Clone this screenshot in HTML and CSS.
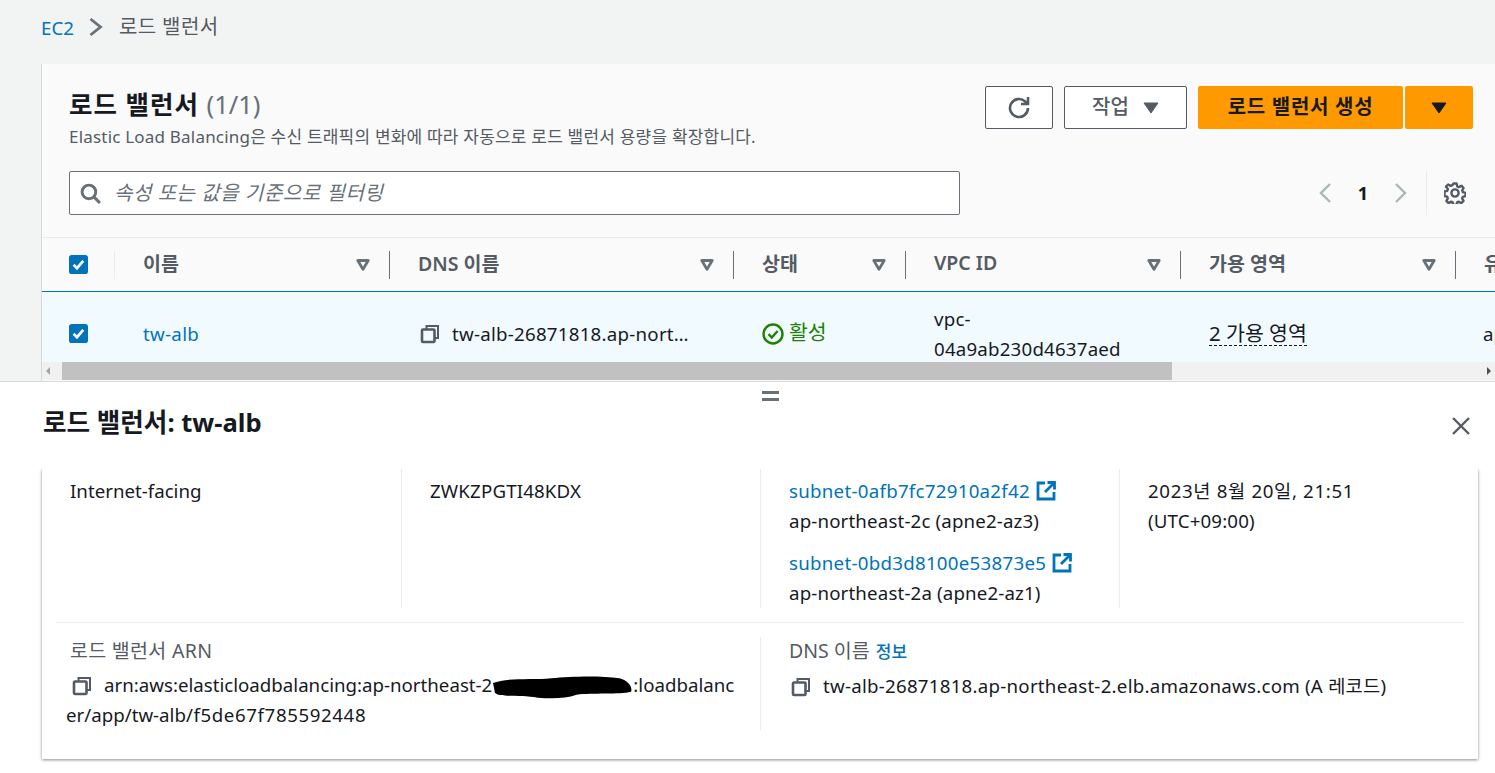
FILE: index.html
```html
<!DOCTYPE html>
<html lang="ko">
<head>
<meta charset="utf-8">
<title>로드 밸런서</title>
<link rel="stylesheet" href="styles.css">
</head>
<body>
<svg class="defs" width="0" height="0" aria-hidden="true">
  <symbol id="copy" viewBox="0 0 20 20"><path d="M6.5 5.5V2h11.5v12h-3.5" fill="none" stroke="currentColor" stroke-width="2"/><rect x="2" y="5.5" width="12.5" height="12.5" rx="1" fill="none" stroke="currentColor" stroke-width="2.6"/></symbol>
  <symbol id="ext" viewBox="0 0 20 20"><path d="M9 2H2v16h16v-7" fill="none" stroke="currentColor" stroke-width="2.8"/><path d="M11.5 1.5h7v7M18 2l-9 9" fill="none" stroke="currentColor" stroke-width="2.8"/></symbol>
  <symbol id="filter" viewBox="0 0 14 12"><path d="M1.8 1.5h10.4L7 10.4z" fill="none" stroke="currentColor" stroke-width="2.8" stroke-linejoin="round"/></symbol>
  <symbol id="check" viewBox="0 0 20 20"><rect width="20" height="20" rx="3" fill="#0073bb"/><path d="M4.8 10.3l3.6 3.6 6.6-7.6" fill="none" stroke="#fff" stroke-width="2.8"/></symbol>
  <symbol id="caret" viewBox="0 0 16 12"><path d="M1 1h14L8 11z" fill="currentColor" stroke="currentColor" stroke-linejoin="round"/></symbol>
</svg>
<div class="page">
  <nav class="crumbs">
    <a class="link">EC2</a>
    <svg class="crumb-sep" viewBox="0 0 14 20"><path d="M1.5 2l10 8-10 8" fill="none" stroke="currentColor" stroke-width="2.8"/></svg>
    <span class="crumb-current">로드 밸런서</span>
  </nav>
  <section class="card">
    <header class="card-head">
      <div class="card-title">
        <h1>로드 밸런서 <span class="count">(1/1)</span></h1>
        <p>Elastic Load Balancing은 수신 트래픽의 변화에 따라 자동으로 로드 밸런서 용량을 확장합니다.</p>
      </div>
      <div class="actions">
        <button class="btn btn-icon"><svg viewBox="0 0 22 22" class="refresh"><path d="M20 11a9 9 0 1 1-2.8-6.5L20 7" fill="none" stroke="currentColor" stroke-width="2.6"/><path d="M20 0v7h-7" fill="none" stroke="currentColor" stroke-width="2.6"/></svg></button>
        <button class="btn btn-menu"><span class="btn-label">작업</span><svg class="caret"><use href="#caret"/></svg></button>
        <div class="split">
          <button class="btn-primary main"><span class="btn-label">로드 밸런서 생성</span></button>
          <button class="btn-primary drop"><svg class="caret"><use href="#caret"/></svg></button>
        </div>
      </div>
    </header>
    <div class="toolbar">
      <div class="search">
        <svg class="search-icon" viewBox="0 0 20 20"><circle cx="8.5" cy="8.5" r="6.5" fill="none" stroke="currentColor" stroke-width="2.8"/><path d="M13 13l6 6" fill="none" stroke="currentColor" stroke-width="2.8"/></svg>
        <span class="placeholder">속성 또는 값을 기준으로 필터링</span>
      </div>
      <div class="pager">
        <svg class="chev" viewBox="0 0 14 22"><path d="M12 2L3 11l9 9" fill="none" stroke="currentColor" stroke-width="2.4"/></svg>
        <b>1</b>
        <svg class="chev" viewBox="0 0 14 22"><path d="M2 2l9 9-9 9" fill="none" stroke="currentColor" stroke-width="2.4"/></svg>
        <div class="pager-div">
          <svg class="gear" viewBox="0 0 22 22"><path d="M9.4 1.5h3.2l.6 2.8 1.7.8 2.5-1.4 2.2 2.3-1.4 2.4.7 1.8 2.6.7v3.2l-2.7.7-.7 1.6 1.4 2.5-2.2 2.2-2.5-1.4-1.7.7-.7 2.6H9.4l-.7-2.7-1.6-.7-2.5 1.5-2.2-2.3 1.4-2.4-.7-1.7-2.6-.7V9.5l2.7-.7.7-1.7L2 4.7l2.2-2.2 2.5 1.4 1.8-.8z" fill="none" stroke="currentColor" stroke-width="2.4" stroke-linejoin="round"/><circle cx="11" cy="11" r="3.6" fill="none" stroke="currentColor" stroke-width="2.4"/></svg>
        </div>
      </div>
    </div>
    <div class="table">
      <div class="thead">
        <div class="th th-check"><svg class="cb"><use href="#check"/></svg></div>
        <div class="th">이름<svg class="filter"><use href="#filter"/></svg></div>
        <div class="th">DNS 이름<svg class="filter"><use href="#filter"/></svg></div>
        <div class="th">상태<svg class="filter"><use href="#filter"/></svg></div>
        <div class="th">VPC ID<svg class="filter"><use href="#filter"/></svg></div>
        <div class="th">가용 영역<svg class="filter"><use href="#filter"/></svg></div>
        <div class="th th-last">유형</div>
      </div>
      <div class="tbody">
        <div class="trow">
          <div class="td td-check"><svg class="cb"><use href="#check"/></svg></div>
          <div class="td td-name"><a class="link">tw-alb</a></div>
          <div class="td"><svg class="copy"><use href="#copy"/></svg><span class="ellipsis">tw-alb-26871818.ap-northeast-2.elb.amazonaws.com</span></div>
          <div class="td status"><svg class="ok" viewBox="0 0 22 22"><circle cx="11" cy="11" r="9.5" fill="none" stroke="currentColor" stroke-width="2.4"/><path d="M6.5 11.2l3.3 3.3 5.8-6.5" fill="none" stroke="currentColor" stroke-width="2.4"/></svg><span class="raised">활성</span></div>
          <div class="td vpc">vpc-<br>04a9ab230d4637aed</div>
          <div class="td"><span class="dashed">2 가용 영역</span></div>
          <div class="td td-last">application</div>
        </div>
      </div>
      <div class="scrollbar">
        <span class="arrow left"></span>
        <span class="thumb"></span>
        <span class="arrow right"></span>
      </div>
    </div>
  </section>
  <section class="panel">
    <div class="handle"></div>
    <div class="panel-head">
      <h2>로드 밸런서: tw-alb</h2>
      <svg class="close" viewBox="0 0 20 20"><path d="M2 2l16 16M18 2L2 18" fill="none" stroke="currentColor" stroke-width="2.4"/></svg>
    </div>
    <div class="details">
      <div class="grid4">
        <div class="cell">Internet-facing</div>
        <div class="cell wide">ZWKZPGTI48KDX</div>
        <div class="cell wide">
          <div class="subnet"><a class="link">subnet-0afb7fc72910a2f42</a><svg class="ext"><use href="#ext"/></svg></div>
          <div>ap-northeast-2c (apne2-az3)</div>
          <div class="subnet second"><a class="link">subnet-0bd3d8100e53873e5</a><svg class="ext"><use href="#ext"/></svg></div>
          <div>ap-northeast-2a (apne2-az1)</div>
        </div>
        <div class="cell"><span class="date">2023년 8월 20일, 21:51</span><br><span class="wide">(UTC+09:00)</span></div>
      </div>
      <div class="grid2">
        <div class="cell2 arn">
          <div class="label arn-label">로드 밸런서 ARN</div>
          <div class="value"><svg class="copy"><use href="#copy"/></svg>arn:aws:elasticloadbalancing:ap-northeast-2<svg class="redact" viewBox="0 0 144 24"><path d="M0 8C14 2 40 5 60 3s50-3 70 0c8 2 14 8 12 14-12 3-40 1-56 3-12 4-24 4-40 3C28 20 6 23 2 18z" fill="#000"/></svg>:loadbalancer/app/tw-alb<span class="id">/f5de67f785592448</span></div>
        </div>
        <div class="cell2">
          <div class="label">DNS 이름 <a class="info">정보</a></div>
          <div class="value dns"><svg class="copy"><use href="#copy"/></svg>tw-alb-26871818.ap-northeast-2.elb.amazonaws.com (A 레코드)</div>
        </div>
      </div>
    </div>
  </section>
</div>
</body>
</html>
```

FILE: styles.css
```css
* { box-sizing: border-box; }
html, body { margin: 0; height: 100%; overflow: hidden; }
body {
  font-family: "Noto Sans", "Noto Sans CJK KR", sans-serif;
  font-size: 18.7px;
  color: #16191f;
  background: #f2f3f3;
}
.defs { position: absolute; }
.page { display: flex; flex-direction: column; height: 773px; }
.link { color: #0073bb; }

.crumbs {
  height: 64px;
  padding: 0 0 10px 41px;
  display: flex;
  align-items: center;
  gap: 15px;
  color: #545b64;
}
.crumb-current { font-size: 20px; letter-spacing: .4px; padding-bottom: 4px; margin-left: 1px; }
.crumb-sep { width: 14px; height: 20px; color: #687078; }

.card {
  height: 317px;
  margin-left: 41px;
  background: #fafafa;
  border-left: 1px solid #d5dbdb;
  display: flex;
  flex-direction: column;
  overflow: hidden;
}
.card-head {
  height: 107px;
  padding: 22px 22px 0 27px;
  display: flex;
  justify-content: space-between;
  align-items: flex-start;
}
.card-title h1 { margin: 0; font-size: 25.5px; line-height: 36px; font-weight: 700; letter-spacing: 1px; }
.count { font-weight: 400; color: #687078; letter-spacing: 0; }
.card-title p { margin: 5px 0 0; font-size: 17px; line-height: 20px; color: #545b64; letter-spacing: .2px; }
.actions { display: flex; gap: 11px; }
.btn {
  height: 43px;
  background: #fff;
  border: 1px solid #545b64;
  border-radius: 2px;
  color: #545b64;
  font: inherit;
  display: flex;
  align-items: center;
  justify-content: center;
  padding: 0;
}
.btn-label { padding-bottom: 4px; }
.btn-icon { width: 68px; }
.refresh { width: 22px; height: 22px; }
.btn-menu { width: 123px; gap: 14px; font-size: 20px; font-weight: 500; }
.caret { width: 16px; height: 12px; }
.split { display: flex; gap: 2px; }
.btn-primary {
  height: 43px;
  background: #ff9900;
  border: 0;
  border-radius: 2px;
  color: #16191f;
  font: inherit;
  font-size: 20px;
  font-weight: 700;
  letter-spacing: .7px;
  display: flex;
  align-items: center;
  justify-content: center;
}
.main { width: 205px; }
.drop { width: 68px; }

.toolbar {
  height: 67px;
  padding-left: 27px;
  display: flex;
  align-items: flex-start;
  justify-content: space-between;
  border-bottom: 1px solid #eaeded;
}
.search {
  width: 891px;
  height: 44px;
  background: #fff;
  border: 1px solid #687078;
  border-radius: 2px;
  display: flex;
  align-items: center;
  padding-left: 10px;
  gap: 13px;
}
.search-icon { width: 21px; height: 21px; color: #687078; }
.placeholder { font-size: 20px; font-style: italic; color: #687078; letter-spacing: .55px; padding-bottom: 3px; }
.pager { display: flex; align-items: flex-start; }
.chev { width: 14px; height: 22px; margin-top: 11px; color: #aab7b8; }
.pager b { width: 62px; text-align: center; line-height: 44px; font-size: 18px; }
.pager-div {
  margin-left: 18px;
  width: 69px;
  height: 44px;
  border-left: 1px solid #eaeded;
  padding: 11px 0 0 17px;
}
.gear { display: block; width: 22px; height: 22px; color: #545b64; }

.table { flex: 1; display: flex; flex-direction: column; }
.thead, .trow { display: grid; grid-template-columns: 73px 274px 344px 172px 275px 275px 1fr; }
.thead { height: 53px; align-items: center; }
.th {
  height: 28px;
  padding: 0 19px 5px 28px;
  border-left: 1px solid #687078;
  display: flex;
  align-items: center;
  justify-content: space-between;
  color: #545b64;
  font-size: 19.5px;
  font-weight: 600;
}
.th-check { border-left: 0; padding: 0 0 0 27px; justify-content: flex-start; border-right: 1px solid #eaeded; }
.th:nth-child(2) { border-left: 0; }
.th-last { padding-right: 0; white-space: nowrap; }
.cb { width: 19px; height: 19px; display: block; }
.filter { width: 14px; height: 12px; color: #687078; flex: none; margin-top: 5px; }
.tbody { height: 71px; overflow: hidden; margin-left: -1px; }
.trow {
  height: 84px;
  background: #f1faff;
  border-top: 1px solid #0073bb;
  border-left: 1px solid #0073bb;
  align-items: center;
}
.td { padding-left: 29px; line-height: 30px; white-space: nowrap; overflow: hidden; display: flex; align-items: center; }
.td-check { padding-left: 27px; }
.td-name { padding-left: 28px; letter-spacing: .3px; }
.vpc { display: block; white-space: normal; letter-spacing: .2px; }
.copy { width: 20px; height: 20px; color: #545b64; flex: none; }
.trow .copy { margin-left: 2px; margin-right: 12px; }
.ellipsis { overflow: hidden; text-overflow: ellipsis; padding-right: 36px; letter-spacing: .25px; }
.status { color: #1d8102; font-size: 20.5px; gap: 5px; }
.raised { padding-bottom: 3px; }
.status .ok { flex: none; }
.ok { width: 22px; height: 22px; }
.dashed { border-bottom: 1px dashed #16191f; line-height: 24px; font-size: 20.5px; margin-bottom: 1px; }
.td-last { padding-left: 28px; }

.scrollbar { height: 18px; background: #f1f1f1; display: flex; align-items: stretch; }
.arrow { width: 20px; flex: none; position: relative; }
.arrow::after { content: ""; position: absolute; top: 5px; border: 4px solid transparent; }
.arrow.left::after { left: 4px; border-right-color: #a3a3a3; border-left: 0; }
.arrow.right { margin-left: auto; }
.arrow.right::after { right: 4px; border-left-color: #505050; border-right: 0; }
.thumb { width: 1110px; background: #c1c1c1; }

.panel { flex: 1; background: #fff; border-top: 1px solid #d5dbdb; display: flex; flex-direction: column; }
.handle {
  width: 17px;
  height: 10px;
  align-self: flex-start;
  margin: 9px 0 0 762px;
  border-top: 3px solid #687078;
  border-bottom: 3px solid #687078;
}
.panel-head {
  height: 52px;
  margin-bottom: 16px;
  padding: 0 24px 0 43px;
  display: flex;
  align-items: center;
  justify-content: space-between;
}
.panel-head h2 { margin: 0 0 12px; font-size: 25.6px; font-weight: 700; }
.close { width: 20px; height: 20px; color: #545b64; margin-top: -2px; }
.details {
  margin-left: 42px;
  width: 1436px;
  height: 290px;
  box-shadow: 0 1px 3px rgba(0,0,0,.45);
  clip-path: inset(0 -6px -6px -6px);
  background: #fff;
  padding: 0 14px;
}
.grid4 {
  height: 154px;
  display: grid;
  grid-template-columns: 345px 359px 359px 1fr;
  border-bottom: 1px solid #eaeded;
  padding-bottom: 14px;
}
.cell { padding: 7px 14px 0 14px; line-height: 30px; border-left: 1px solid #eaeded; }
.cell + .cell { padding-left: 28px; }
.cell:first-child { border-left: 0; }
.wide { letter-spacing: .15px; }
.date { letter-spacing: .65px; }
.second { margin-top: 12px; }
.subnet { display: flex; align-items: center; gap: 6px; letter-spacing: .27px; }
.ext { width: 20px; height: 20px; color: #0073bb; }
.grid2 { display: grid; grid-template-columns: 704px 1fr; padding-top: 14px; }
.cell2 { height: 93px; padding: 0 14px; }
.arn { padding: 0 20px 0 10px; }
.cell2 + .cell2 { border-left: 1px solid #eaeded; padding-left: 28px; }
.label { color: #545b64; line-height: 30px; font-size: 19.5px; margin-top: -1px; margin-bottom: 4px; }
.arn-label { padding-left: 4px; letter-spacing: .3px; }
.info { color: #0073bb; font-size: 17px; font-weight: 500; margin-left: 1px; }
.value { line-height: 30px; word-break: break-all; }
.value .copy { vertical-align: -4px; margin: 0 12px 0 6px; }
.dns { letter-spacing: .25px; }
.dns .copy { margin-left: 2px; }
.id { letter-spacing: .6px; }
.redact { width: 140px; height: 24px; vertical-align: -7px; margin-left: 1px; }
```
